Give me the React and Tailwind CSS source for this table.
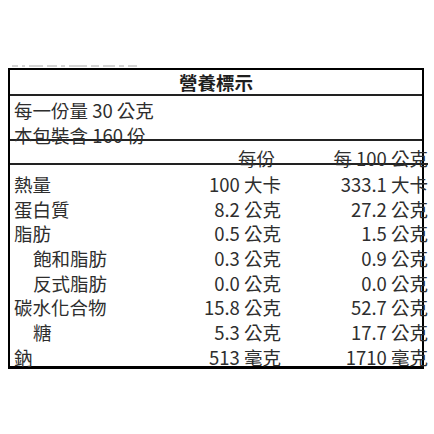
import React from "react";

const rows = [
  { name: "熱量", per: "100 大卡", per100: "333.1 大卡" },
  { name: "蛋白質", per: "8.2 公克", per100: "27.2 公克" },
  { name: "脂肪", per: "0.5 公克", per100: "1.5 公克" },
  { name: "飽和脂肪", per: "0.3 公克", per100: "0.9 公克", sub: true },
  { name: "反式脂肪", per: "0.0 公克", per100: "0.0 公克", sub: true },
  { name: "碳水化合物", per: "15.8 公克", per100: "52.7 公克" },
  { name: "糖", per: "5.3 公克", per100: "17.7 公克", sub: true },
  { name: "鈉", per: "513 毫克", per100: "1710 毫克" },
];

// faint marks peeking out above the table
const marks = [6, 3, 14, 10, 4, 18, 8, 12, 5, 9];

export default function App() {
  return (
    <div
      className="w-[434px] h-[434px] bg-white pt-[63px] pl-[8px] text-[#2e2e2e] text-[18.5px]"
      style={{ fontFamily: '"Noto Sans CJK TC", "Noto Sans", sans-serif' }}
    >
      {/* faint cut-off marks above the table */}
      <div className="h-[5px] flex items-end gap-[4px] pl-[4px] pb-[1px]">
        {marks.map((w, i) => (
          <div key={i} className="h-[2px] bg-[#d4d4d4]" style={{ width: w }} />
        ))}
      </div>

      {/* Table */}
      <div className="w-[416px] border-2 border-b-[3px] border-black">
        {/* Title */}
        <div className="h-[26px] border-b-2 border-[#222] text-center font-bold leading-[24px] text-[#1e1e1e]">
          營養標示
        </div>

        {/* Serving */}
        <div className="h-[45px] border-b-2 border-[#222] pl-[4px] pt-[2px] leading-[25px]">
          <div>每一份量 30 公克</div>
          <div>本包裝含 160 份</div>
        </div>

        {/* Header */}
        <div className="h-[24px] border-b-2 border-[#222] pt-[5px] leading-[24px] flex -mr-[6px]">
          <div className="flex-1" />
          <div className="w-[100px] text-right pr-[6px]">每份</div>
          <div className="w-[147px] text-right">每 100 公克</div>
        </div>

        {/* Nutrients */}
        <div className="pt-[7px] -mr-[6px]">
          {rows.map((r, i) => (
            <div
              key={r.name}
              className={
                "flex leading-[25px] " +
                (i === rows.length - 1 ? "h-[21px]" : "h-[24.7px]")
              }
            >
              <div className={"flex-1 " + (r.sub ? "pl-[23px]" : "pl-[4px]")}>
                {r.name}
              </div>
              <div className="w-[100px] text-right">{r.per}</div>
              <div className="w-[147px] text-right">{r.per100}</div>
            </div>
          ))}
        </div>
      </div>
    </div>
  );
}
